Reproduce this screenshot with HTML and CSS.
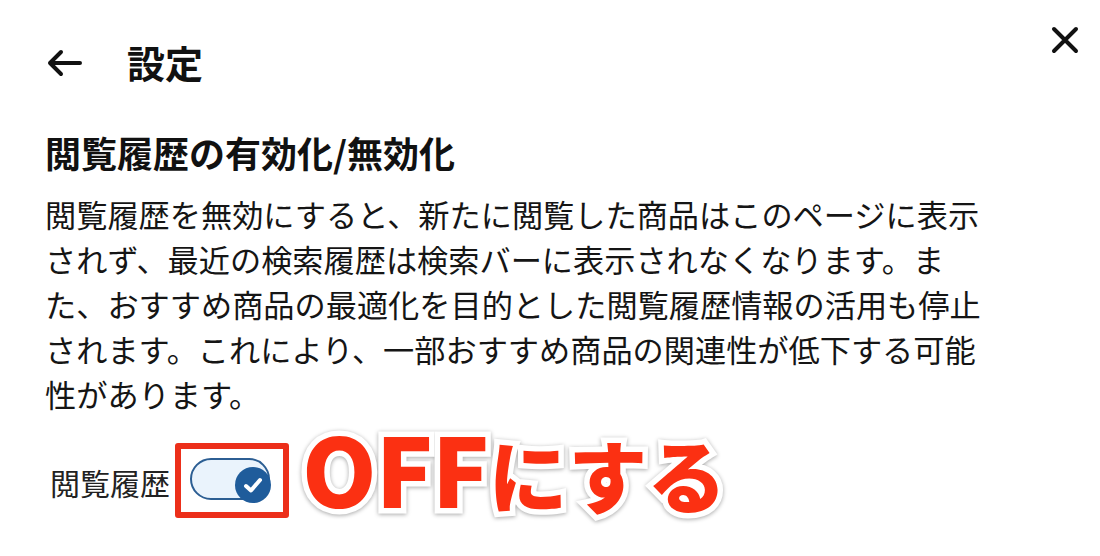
FILE: index.html
```html
<!DOCTYPE html>
<html lang="ja">
<head>
<meta charset="utf-8">
<link rel="stylesheet" href="styles.css">
</head>
<body>
<div class="page">
  <header class="header">
    <svg class="back" width="36" height="28" viewBox="0 0 36 28"><path d="M34 14H4M15 3L4 14L15 25" fill="none" stroke="#111" stroke-width="4" stroke-linecap="round" stroke-linejoin="round"/></svg>
    <h1 class="title">設定</h1>
  </header>
  <svg class="close" width="28" height="28" viewBox="0 0 28 28"><path d="M3 3L25 25M25 3L3 25" fill="none" stroke="#111" stroke-width="4" stroke-linecap="round"/></svg>
  <h2 class="heading">閲覧履歴の有効化/無効化</h2>
  <p class="desc">閲覧履歴を無効にすると、新たに閲覧した商品はこのページに表示されず、最近の検索履歴は検索バーに表示されなくなります。また、おすすめ商品の最適化を目的とした閲覧履歴情報の活用も停止されます。これにより、一部おすすめ商品の関連性が低下する可能性があります。</p>
  <div class="row">
    <span class="label">閲覧履歴</span>
    <div class="redbox">
      <div class="track">
        <span class="knob"><svg width="36" height="36" viewBox="0 0 36 36"><path d="M11 19L16 23.5L25 13" fill="none" stroke="#fff" stroke-width="4" stroke-linecap="round" stroke-linejoin="round"/></svg></span>
      </div>
    </div>
    <span class="annot"><span class="latin">OFF</span>にする</span>
  </div>
</div>
</body>
</html>
```
FILE: styles.css
```css
html, body {
  margin: 0;
  padding: 0;
  background: #fff;
}
body {
  font-family: "Noto Sans CJK JP", "Noto Sans", sans-serif;
  color: #111;
  width: 1100px;
  height: 556px;
  overflow: hidden;
}
.page {
  position: relative;
  padding: 0 0 0 45px;
}
.header {
  display: flex;
  align-items: center;
  height: 64px;
  padding-top: 30px;
  gap: 45px;
}
.back {
  margin-left: 1px;
  margin-top: 1px;
  flex: none;
}
.title {
  margin: 0;
  font-size: 38px;
  line-height: 38px;
  font-weight: 700;
}
.close {
  position: absolute;
  top: 26px;
  left: 1051px;
}
.heading {
  margin: 37px 0 0;
  font-size: 36px;
  line-height: 42px;
  font-weight: 700;
}
.desc {
  margin: 18px 0 0;
  width: 945px;
  font-size: 31.2px;
  line-height: 45px;
  font-weight: 400;
  color: #151515;
}
.row {
  display: flex;
  align-items: center;
  margin-top: 27px;
}
.label {
  font-size: 30px;
  line-height: 40px;
  margin-left: 5px;
  margin-top: 2px;
  color: #222;
}
.redbox {
  margin-left: 5px;
  border: 6px solid #ec2f1a;
  border-radius: 3px;
  padding: 9px 13px 9px 9px;
}
.track {
  position: relative;
  box-sizing: border-box;
  width: 80px;
  height: 42px;
  border: 2px solid #2c5e93;
  border-radius: 21px;
  background: #eaf3fc;
  margin-bottom: 3px;
}
.knob {
  position: absolute;
  right: -3px;
  top: 7px;
  width: 36px;
  height: 36px;
  border-radius: 50%;
  background: #1f5c9b;
  display: block;
}
.knob svg {
  display: block;
}
.annot {
  margin-left: 13px;
  margin-top: -20px;
  font-size: 79px;
  line-height: 66px;
  font-weight: 900;
  color: #fb3012;
  -webkit-text-stroke: 11px #fff;
  paint-order: stroke fill;
  filter: drop-shadow(0 1px 2px rgba(0,0,0,0.35));
}
.latin {
  font-size: 95px;
  letter-spacing: -1px;
}
```
